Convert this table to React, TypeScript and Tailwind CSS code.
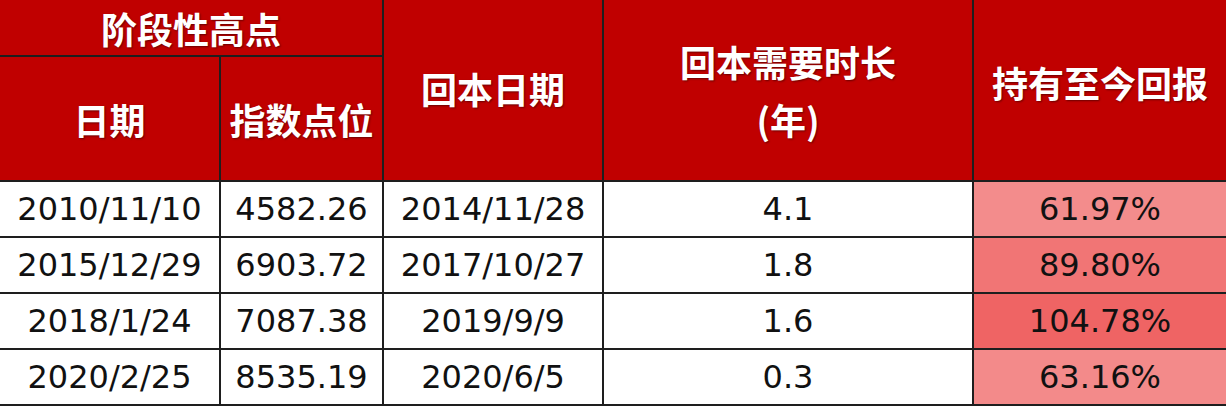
import React from "react";

type Row = { date: string; level: string; back: string; years: string; ret: string; tint: string };

const rows: Row[] = [
  { date: "2010/11/10", level: "4582.26", back: "2014/11/28", years: "4.1", ret: "61.97%", tint: "bg-[#f38c8c]" },
  { date: "2015/12/29", level: "6903.72", back: "2017/10/27", years: "1.8", ret: "89.80%", tint: "bg-[#f17575]" },
  { date: "2018/1/24", level: "7087.38", back: "2019/9/9", years: "1.6", ret: "104.78%", tint: "bg-[#ef6464]" },
  { date: "2020/2/25", level: "8535.19", back: "2020/6/5", years: "0.3", ret: "63.16%", tint: "bg-[#f38a8a]" },
];

const head =
  "border-2 border-[#1e1e1e] bg-[#c00000] text-white font-bold text-[36px] text-center align-middle [text-shadow:1px_1px_2px_rgba(0,0,0,0.45)]";
const cell = "border-2 border-[#1e1e1e] h-[56px] text-center align-middle text-[32px] text-[#111]";

export default function App() {
  return (
    <div className="w-[1226px] h-[406px] bg-white overflow-hidden">
      <table
        className="table-fixed border-collapse w-[1226px]"
        style={{ fontFamily: '"DejaVu Sans", "Noto Sans CJK SC", sans-serif' }}
      >
        <colgroup>
          <col className="w-[220px]" />
          <col className="w-[163px]" />
          <col className="w-[220px]" />
          <col className="w-[370px]" />
          <col className="w-[253px]" />
        </colgroup>
        <thead className="font-['Noto_Sans_CJK_SC',sans-serif]">
          <tr>
            <th colSpan={2} className={`${head} h-[56px] border-l-0 border-t-0 leading-none`}>
              阶段性高点
            </th>
            <th rowSpan={2} className={`${head} border-t-0 leading-none pb-1`}>
              回本日期
            </th>
            <th rowSpan={2} className={`${head} border-t-0 leading-[58px]`}>
              回本需要时长
              <br />
              (年)
            </th>
            <th rowSpan={2} className={`${head} border-t-0 border-r-0 leading-none pb-4`}>
              持有至今回报
            </th>
          </tr>
          <tr>
            <th className={`${head} h-[125px] border-l-0 leading-none`}>日期</th>
            <th className={`${head} leading-none`}>指数点位</th>
          </tr>
        </thead>
        <tbody>
          {rows.map((r) => (
            <tr key={r.date}>
              <td className={`${cell} border-l-0`}>{r.date}</td>
              <td className={cell}>{r.level}</td>
              <td className={cell}>{r.back}</td>
              <td className={cell}>{r.years}</td>
              <td className={`${cell} ${r.tint} border-r-0`}>{r.ret}</td>
            </tr>
          ))}
        </tbody>
      </table>
    </div>
  );
}
